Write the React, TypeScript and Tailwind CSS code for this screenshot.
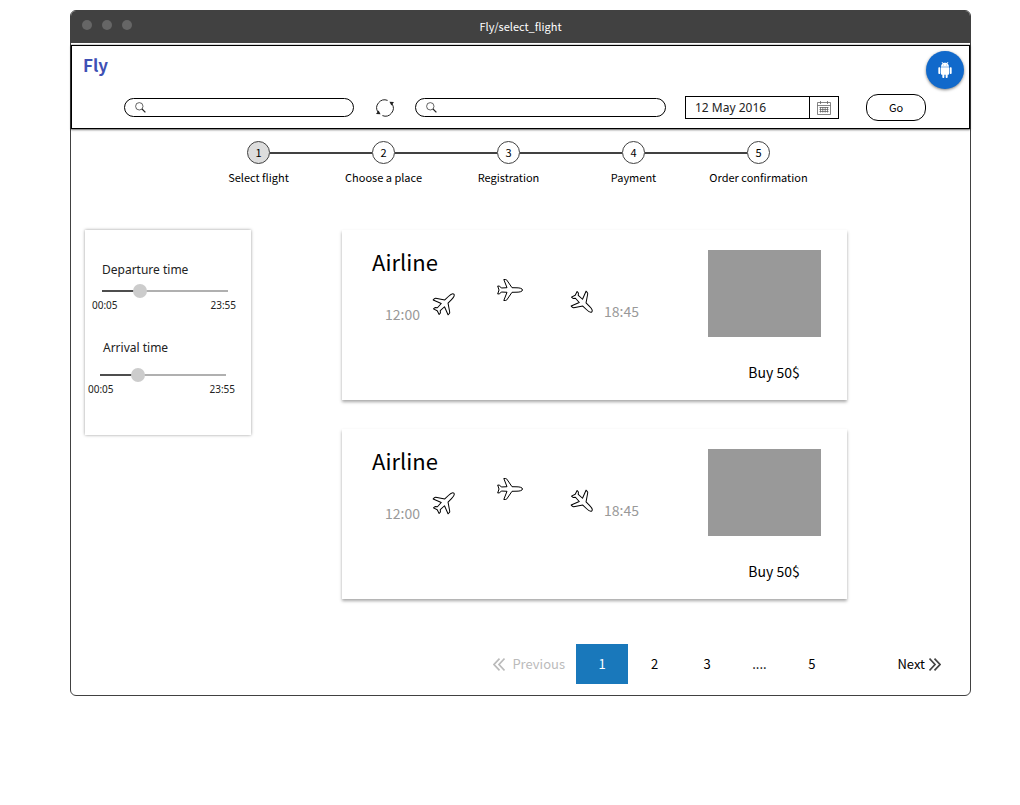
import { useState } from "react";

const steps = ["Select flight", "Choose a place", "Registration", "Payment", "Order confirmation"];

function SearchIcon() {
  return (
    <svg className="size-[11px] shrink-0" viewBox="0 0 11 11" fill="none" stroke="#222">
      <circle cx="4.3" cy="4.3" r="3.7" strokeWidth="0.7" />
      <path d="M7 7l3.4 3.4" strokeWidth="1.2" />
    </svg>
  );
}

function SearchBox({ label, className }: { label: string; className: string }) {
  return (
    <label className={`flex h-[19px] min-w-0 items-center rounded-full border border-black px-[10px] ${className}`}>
      <SearchIcon />
      <input type="text" aria-label={label} className="ml-1 min-w-0 flex-1 bg-transparent text-xs outline-none" />
    </label>
  );
}

function SwapIcon() {
  return (
    <svg className="h-[18px] w-[18px]" viewBox="0 0 18 18" fill="none" stroke="#222">
      <path d="M11.6 1.4A8 8 0 0 0 2 13.2" />
      <path d="M6.4 16.6A8 8 0 0 0 16 4.8" />
      <path d="M13.4 2.8l4.6.2-2.6 3.6z M4.6 15.2L0 15l2.6-3.6z" fill="#222" stroke="none" />
    </svg>
  );
}

function CalendarIcon() {
  return (
    <svg className="h-[14px] w-[14px]" viewBox="0 0 14 14" fill="none" stroke="#666" strokeWidth="0.8">
      <path d="M.5 1.5h13v12H.5zM.5 4.5h13M3.5 0v3M10.5 0v3" />
      <path d="M2.5 6.5h9M2.5 8.5h9M2.5 10.5h9M3.5 6v5.5M5.8 6v5.5M8.2 6v5.5M10.5 6v5.5" />
    </svg>
  );
}

function AndroidIcon() {
  return (
    <svg className="size-4" viewBox="0 0 24 24" fill="white">
      <path d="M6 18c0 .55.45 1 1 1h1v3.5c0 .83.67 1.5 1.5 1.5s1.5-.67 1.5-1.5V19h2v3.5c0 .83.67 1.5 1.5 1.5s1.5-.67 1.5-1.5V19h1c.55 0 1-.45 1-1V8H6v10zM3.5 8C2.67 8 2 8.67 2 9.5v7c0 .83.67 1.5 1.5 1.5S5 17.33 5 16.5v-7C5 8.67 4.33 8 3.5 8zm17 0c-.83 0-1.5.67-1.5 1.5v7c0 .83.67 1.5 1.5 1.5s1.5-.67 1.5-1.5v-7c0-.83-.67-1.5-1.5-1.5zm-4.97-5.84l1.3-1.3c.2-.2.2-.51 0-.71-.2-.2-.51-.2-.71 0l-1.48 1.48C13.85 1.23 12.95 1 12 1c-.96 0-1.86.23-2.66.63L7.85.15c-.2-.2-.51-.2-.71 0-.2.2-.2.51 0 .71l1.31 1.31C6.97 3.26 6 5.01 6 7h12c0-1.99-.97-3.75-2.47-4.84zM10 5H9V4h1v1zm5 0h-1V4h1v1z" />
    </svg>
  );
}

function Plane({ className = "" }: { className?: string }) {
  return (
    <svg className={`h-[22px] w-[26px] shrink-0 overflow-visible ${className}`} viewBox="0 0 26 22" fill="none" stroke="black" strokeLinejoin="round">
      <path d="M25.5 11C25.5 9.5 22.5 8.8 20 8.8L15 8.7 9.8 1.1Q9.3.5 8.3.5H6.8L10 8.7 4.3 9 2.7 7.2.7 7 2 11 .7 15l2-.2L4.3 13l5.7.3-3.2 8.2h1.5q1 0 1.5-.6L15 13.3l5-.1c2.5 0 5.5-.7 5.5-2.2z" />
    </svg>
  );
}

function TimeSlider({ id, label, className, labelClass, trackClass }: { id: string; label: string; className: string; labelClass: string; trackClass: string }) {
  const [value, setValue] = useState(28);
  const fill = `calc(7px + (100% - 14px) * ${value / 100})`;
  return (
    <div className={`flex flex-col ${className}`}>
      <label htmlFor={id} className={`text-xs leading-4 text-[#222] ${labelClass}`}>{label}</label>
      <input
        id={id}
        type="range"
        value={value}
        onChange={(e) => setValue(Number(e.target.value))}
        style={{ backgroundImage: `linear-gradient(to right, #4d4d4d ${fill}, #b0b0b0 ${fill})` }}
        className={`h-[14px] w-[126px] appearance-none bg-[length:100%_2px] bg-center bg-no-repeat [&::-webkit-slider-thumb]:size-[14px] [&::-webkit-slider-thumb]:appearance-none [&::-webkit-slider-thumb]:rounded-full [&::-webkit-slider-thumb]:bg-[#cccccc] ${trackClass}`}
      />
      <div className="flex justify-between text-[10px] leading-[14px] text-[#222]">
        <span>00:05</span>
        <span>23:55</span>
      </div>
    </div>
  );
}

function FlightCard() {
  return (
    <article className="flex h-[170px] justify-between bg-white pr-[26px] pl-[30px] shadow-[0_2px_3px_rgba(0,0,0,0.35)]">
      <div>
        <h2 className="mt-[14px] text-[22px] leading-[35px]">Airline</h2>
        <div className="flex items-start pl-[13px] text-sm leading-5 text-[#999]">
          <span className="mt-[25px] w-[34px]">12:00</span>
          <Plane className="mt-[13px] ml-[13px] -rotate-45" />
          <Plane className="ml-[39px]" />
          <Plane className="mt-[13px] ml-[47px] rotate-45" />
          <span className="mt-[22px] ml-[8px]">18:45</span>
        </div>
      </div>
      <div className="flex flex-col items-center">
        <div className="mt-5 h-[87px] w-[113px] bg-[#999]" />
        <button type="button" className="mt-[25px] ml-[19px] text-sm leading-5">Buy 50$</button>
      </div>
    </article>
  );
}

export default function App() {
  return (
    <div className="min-h-screen bg-white pt-[10px] pr-[49px] pl-[70px] font-['Noto_Sans_CJK_SC',sans-serif] text-black">
      <div className="rounded-md border border-[#414141]">
        <div className="relative flex h-8 items-center justify-center rounded-t-[5px] bg-[#414141] pb-[3px] text-white">
          <div className="absolute top-[9px] left-[11px] flex gap-[10px]">
            <span className="size-[10px] rounded-full bg-[#666]" />
            <span className="size-[10px] rounded-full bg-[#666]" />
            <span className="size-[10px] rounded-full bg-[#666]" />
          </div>
          <span className="text-[11px] leading-4">Fly/select_flight</span>
        </div>

        <header className="mt-[2px] border border-black pb-[7px] shadow-[0_0_1px_rgba(0,0,0,0.8),0_1px_2px_rgba(0,0,0,0.5)]">
          <div className="flex items-start justify-between pr-[5px] pl-[11px]">
            <a href="#" className="mt-[7px] text-[17px] leading-6 font-bold text-[#3f51b5]">Fly</a>
            <button type="button" aria-label="Android" className="mt-[5px] flex size-[38px] items-center justify-center rounded-full bg-[#1169cb] shadow-[0_1px_3px_rgba(0,0,0,0.5)]">
              <AndroidIcon />
            </button>
          </div>
          <form className="mt-[5px] flex items-center pr-[43px] pl-[52px]" onSubmit={(e) => e.preventDefault()}>
            <SearchBox label="From" className="flex-[208]" />
            <button type="button" aria-label="Swap" className="flex w-[61px] justify-center">
              <SwapIcon />
            </button>
            <SearchBox label="To" className="flex-[229]" />
            <div className="ml-[19px] flex h-[23px] w-[154px] border border-black">
              <input type="text" aria-label="Date" defaultValue="12 May 2016" className="min-w-0 flex-1 pl-[9px] font-['Noto_Sans',sans-serif] text-xs text-[#222] outline-none" />
              <button type="button" aria-label="Open calendar" className="flex w-[29px] items-center justify-center border-l border-black">
                <CalendarIcon />
              </button>
            </div>
            <button type="submit" className="ml-[27px] h-[27px] w-[60px] rounded-[12px] border border-black text-[11px]">Go</button>
          </form>
        </header>

        <ol className="mt-[12px] ml-[125px] flex w-[625px] text-center">
          {steps.map((step, i) => (
            <li key={step} className="flex w-1/5 flex-col items-center">
              <div className="flex w-full items-center">
                <span className={`h-[2px] flex-1 ${i > 0 ? "bg-[#414141]" : ""}`} />
                <span className={`flex size-[23px] items-center justify-center rounded-full border border-[#414141] text-[11px] ${i === 0 ? "bg-[#ddd]" : "bg-white"}`}>
                  {i + 1}
                </span>
                <span className={`h-[2px] flex-1 ${i < 4 ? "bg-[#414141]" : ""}`} />
              </div>
              <span className="mt-[5px] text-[11px] leading-4 whitespace-nowrap">{step}</span>
            </li>
          ))}
        </ol>

        <main className="mt-[45px] flex items-start pr-[123px] pl-[14px]">
          <aside className="h-[205px] w-[166px] shrink-0 pt-[32px] font-['Noto_Sans',sans-serif] shadow-[0_0_3px_rgba(0,0,0,0.4)]">
            <TimeSlider id="departure" label="Departure time" className="pr-[15px] pl-[7px]" labelClass="pl-[10px]" trackClass="mt-[6px] ml-[10px]" />
            <TimeSlider id="arrival" label="Arrival time" className="mt-[28px] pr-[16px] pl-[3px]" labelClass="pl-[15px]" trackClass="mt-[12px] ml-[12px]" />
          </aside>
          <section className="ml-[91px] flex flex-1 flex-col gap-[29px]">
            <FlightCard />
            <FlightCard />
          </section>
        </main>

        <nav aria-label="Pages" className="mt-[45px] mb-[11px] flex h-10 items-stretch justify-end pr-[29px] text-[13px]">
          <button type="button" disabled className="mr-[11px] flex items-center gap-[7px] text-[#bbb]">
            <svg className="h-[13px] w-[12px]" viewBox="0 0 12 13" fill="none" stroke="currentColor" strokeWidth="1.7">
              <path d="M6.5.6L1 6.5l5.5 5.9M11.5.6L6 6.5l5.5 5.9" />
            </svg>
            Previous
          </button>
          <div className="grid w-[262px] grid-cols-5">
            {["1", "2", "3", "....", "5"].map((page, i) => (
              <button key={page} type="button" className={i === 0 ? "bg-[#1978bb] text-white" : ""}>{page}</button>
            ))}
          </div>
          <button type="button" className="flex w-[103px] items-center justify-end gap-1">
            Next
            <svg className="h-[13px] w-[12px]" viewBox="0 0 12 13" fill="none" stroke="#444" strokeWidth="1.7">
              <path d="M.5.6L6 6.5.5 12.4M5.5.6L11 6.5l-5.5 5.9" />
            </svg>
          </button>
        </nav>
      </div>
    </div>
  );
}
